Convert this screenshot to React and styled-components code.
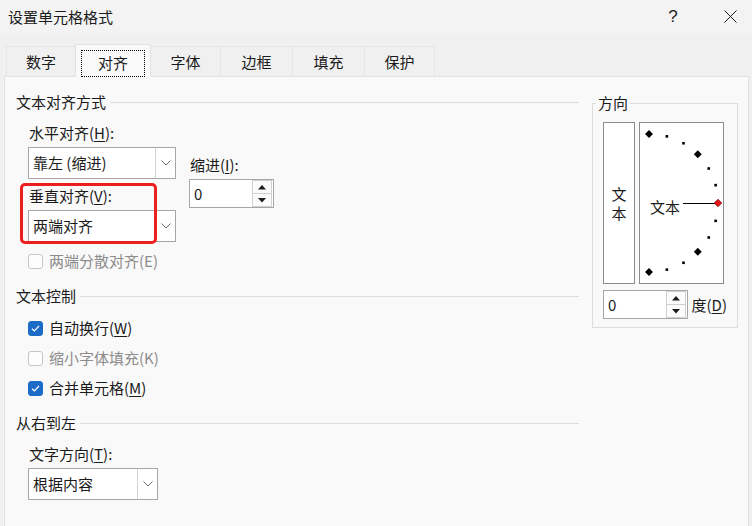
import React from 'react'
import styled, { createGlobalStyle } from 'styled-components'

const GlobalStyle = createGlobalStyle`
  html, body { margin: 0; padding: 0; }
  body {
    background: #f0f0f0;
    font-family: "Noto Sans CJK SC", "Microsoft YaHei UI", sans-serif;
    color: #1b1b1b;
  }
  * { box-sizing: border-box; }
`

const tabs = [
  { label: '数字', width: 70 },
  { label: '对齐', width: 76, active: true },
  { label: '字体', width: 71 },
  { label: '边框', width: 73 },
  { label: '填充', width: 73 },
  { label: '保护', width: 71 },
]

const dialTicks = [90, 75, 60, 45, 30, 15, -15, -30, -45, -60, -75, -90]

const Chevron = () => (
  <svg width="10" height="6" viewBox="0 0 10 6">
    <polyline points="0.5,0.5 5,5 9.5,0.5" fill="none" stroke="#6a6a6a" strokeWidth="1" />
  </svg>
)

const Tri = ({ down }) => (
  <svg width="8" height="5" viewBox="0 0 8 5">
    <polygon points={down ? '0,0 8,0 4,4.5' : '0,4.5 8,4.5 4,0'} fill="#1b1b1b" />
  </svg>
)

const Select = ({ value, width }) => (
  <SelectBox $width={width}>
    <SelectValue>{value}</SelectValue>
    <SelectButton><Chevron /></SelectButton>
  </SelectBox>
)

const Spin = ({ value }) => (
  <SpinBox>
    <SpinValue>{value}</SpinValue>
    <SpinButtons>
      <SpinButton><Tri /></SpinButton>
      <SpinButton><Tri down /></SpinButton>
    </SpinButtons>
  </SpinBox>
)

const Check = ({ checked, disabled, children }) => (
  <CheckRow $disabled={disabled}>
    <CheckMark $checked={checked}>
      {checked && (
        <svg width="11" height="11" viewBox="0 0 11 11">
          <polyline points="2,5.8 4.4,8 9,3" fill="none" stroke="#fff" strokeWidth="1.2" />
        </svg>
      )}
    </CheckMark>
    <span>{children}</span>
  </CheckRow>
)

const Dial = () => {
  const cx = 9
  const cy = 80
  const r = 69
  return (
    <DialSvg viewBox="0 0 83 160">
      {dialTicks.map(a => {
        const rad = (a * Math.PI) / 180
        const x = cx + r * Math.cos(rad)
        const y = cy - r * Math.sin(rad)
        const big = Math.abs(a) === 90 || Math.abs(a) === 45
        return big ? (
          <rect key={a} x={x - 2.8} y={y - 2.8} width="5.6" height="5.6" fill="#000" transform={`rotate(45 ${x} ${y})`} />
        ) : (
          <rect key={a} x={x - 1.3} y={y - 1.3} width="2.6" height="2.6" fill="#000" />
        )
      })}
      <line x1="43" y1="80.5" x2="76" y2="80.5" stroke="#000" strokeWidth="1" />
      <rect x="75.3" y="77.3" width="5.4" height="5.4" fill="#e3141a" stroke="#6b0000" strokeWidth="0.6" transform="rotate(45 78 80)" />
    </DialSvg>
  )
}

const App = () => {
  return (
    <Dialog>
      <GlobalStyle />
      <TitleBar>
        <Title>设置单元格格式</Title>
        <TitleButtons>
          <HelpButton>?</HelpButton>
          <CloseButton>
            <svg width="13" height="13" viewBox="0 0 13 13">
              <path d="M0.5 0.5 L12.5 12.5 M12.5 0.5 L0.5 12.5" stroke="#1b1b1b" strokeWidth="1" fill="none" />
            </svg>
          </CloseButton>
        </TitleButtons>
      </TitleBar>

      <TabRow>
        {tabs.map(t => (
          <Tab key={t.label} $width={t.width} $active={t.active}>
            {t.active ? <FocusRing>{t.label}</FocusRing> : t.label}
          </Tab>
        ))}
      </TabRow>

      <Panel>
        <LeftColumn>
          <Header><span>文本对齐方式</span><Rule /></Header>
          <AlignBody>
            <Fields>
              <Label>水平对齐(<Key>H</Key>):</Label>
              <Select value="靠左 (缩进)" width={148} />
              <Label $top={7}>垂直对齐(<Key>V</Key>):</Label>
              <Select value="两端对齐" width={148} />
              <Highlight />
            </Fields>
            <IndentColumn>
              <Label>缩进(<Key>I</Key>):</Label>
              <Spin value="0" />
            </IndentColumn>
          </AlignBody>
          <CheckList $top={9}>
            <Check disabled>两端分散对齐(E)</Check>
          </CheckList>

          <Header $top={15}><span>文本控制</span><Rule /></Header>
          <CheckList $top={12}>
            <Check checked>自动换行(<Key>W</Key>)</Check>
            <Check disabled>缩小字体填充(K)</Check>
            <Check checked>合并单元格(<Key>M</Key>)</Check>
          </CheckList>

          <Header $top={15}><span>从右到左</span><Rule /></Header>
          <Fields $top={11}>
            <Label>文字方向(<Key>T</Key>):</Label>
            <Select value="根据内容" width={130} />
          </Fields>
        </LeftColumn>

        <DirectionGroup>
          <Legend>方向</Legend>
          <DirectionInner>
            <DirectionRow>
              <VerticalBox>
                <VerticalChar>文</VerticalChar>
                <VerticalChar>本</VerticalChar>
              </VerticalBox>
              <DialBox>
                <Dial />
                <DialText>文本</DialText>
              </DialBox>
            </DirectionRow>
            <DegreeRow>
              <Spin value="0" />
              <span>度(<Key>D</Key>)</span>
            </DegreeRow>
          </DirectionInner>
        </DirectionGroup>
      </Panel>
    </Dialog>
  )
}

export default App

const Dialog = styled.div`
  width: 752px;
  height: 526px;
  overflow: hidden;
  display: flex;
  flex-direction: column;
  background: #f0f0f0;
`

const TitleBar = styled.div`
  height: 35px;
  flex: none;
  display: flex;
  align-items: center;
  background: #f3f3f3;
  padding-left: 8px;
  padding-bottom: 2px;
`

const Title = styled.div`
  font-size: 15px;
  line-height: 20px;
`

const TitleButtons = styled.div`
  margin-left: auto;
  display: flex;
  gap: 12px;
`

const HelpButton = styled.div`
  width: 46px;
  text-align: center;
  font-family: "Liberation Sans", sans-serif;
  font-size: 17px;
  line-height: 20px;
`

const CloseButton = styled.div`
  width: 44px;
  display: flex;
  justify-content: center;
  align-items: center;
`

const TabRow = styled.div`
  height: 42px;
  flex: none;
  display: flex;
  align-items: flex-end;
  padding-left: 6px;
  position: relative;
  z-index: 1;
  margin-bottom: -1px;
`

const Tab = styled.div`
  width: ${p => p.$width}px;
  height: ${p => (p.$active ? 33 : 31)}px;
  margin-right: -1px;
  display: flex;
  align-items: center;
  justify-content: center;
  font-size: 15px;
  line-height: 20px;
  background: ${p => (p.$active ? '#f9f9f9' : '#f0f0f0')};
  border: 1px solid ${p => (p.$active ? '#e2e2e2' : '#e6e6e6')};
  border-bottom: ${p => (p.$active ? 'none' : '1px solid #e2e2e2')};
  position: relative;
  z-index: ${p => (p.$active ? 2 : 1)};
  padding-top: ${p => (p.$active ? 1 : 0)}px;
`

const FocusRing = styled.span`
  width: 64px;
  height: 27px;
  margin-top: 3px;
  border: 1px dotted #000;
  display: flex;
  align-items: center;
  justify-content: center;
`

const Panel = styled.div`
  flex: 1;
  margin: 0 3px 0 4px;
  border: 1px solid #e2e2e2;
  border-bottom: none;
  background: #f9f9f9;
  display: flex;
  align-items: flex-start;
  padding: 15px 0 0 11px;
  gap: 13px;
`

const LeftColumn = styled.div`
  width: 563px;
  display: flex;
  flex-direction: column;
`

const Header = styled.div`
  display: flex;
  align-items: center;
  font-size: 15px;
  line-height: 20px;
  margin-top: ${p => p.$top || 0}px;
`

const Rule = styled.div`
  flex: 1;
  height: 1px;
  margin-left: 4px;
  background: #dcdcdc;
`

const AlignBody = styled.div`
  display: flex;
  margin-top: 11px;
  padding-left: 12px;
`

const Fields = styled.div`
  position: relative;
  display: flex;
  flex-direction: column;
  align-items: flex-start;
  margin-top: ${p => p.$top || 0}px;
  padding-left: ${p => (p.$top ? 12 : 0)}px;
`

const Label = styled.div`
  font-size: 15px;
  line-height: 20px;
  padding-left: 1px;
  margin-top: ${p => p.$top || 0}px;
  margin-bottom: 4px;
  white-space: nowrap;
`

const Key = styled.span`
  text-decoration: underline;
  text-underline-offset: 2px;
`

const SelectBox = styled.div`
  width: ${p => p.$width}px;
  height: 32px;
  display: flex;
  background: #fff;
  border: 1px solid #a6a6a6;
`

const SelectValue = styled.div`
  flex: 1;
  display: flex;
  align-items: center;
  padding-left: 4px;
  font-size: 15px;
  line-height: 20px;
`

const SelectButton = styled.div`
  width: 20px;
  border-left: 1px solid #d2d2d2;
  display: flex;
  align-items: center;
  justify-content: center;
`

const Highlight = styled.div`
  position: absolute;
  left: -8px;
  top: 60px;
  width: 137px;
  height: 61px;
  border: 3px solid #ec1f1f;
  border-radius: 5px;
  pointer-events: none;
`

const IndentColumn = styled.div`
  margin-left: 13px;
  padding-top: 32px;
  display: flex;
  flex-direction: column;
  align-items: flex-start;
`

const SpinBox = styled.div`
  width: 85px;
  height: 29px;
  display: flex;
  background: #fff;
  border: 1px solid #a6a6a6;
`

const SpinValue = styled.div`
  flex: 1;
  display: flex;
  align-items: center;
  padding-left: 4px;
  font-size: 15px;
`

const SpinButtons = styled.div`
  width: 20px;
  margin: 0 1px 0 0;
  display: flex;
  flex-direction: column;
`

const SpinButton = styled.div`
  flex: 1;
  display: flex;
  align-items: center;
  justify-content: center;
  border: 1px solid #d0d0d0;
  background: #fbfbfb;
  & + & { border-top: none; }
`

const CheckList = styled.div`
  display: flex;
  flex-direction: column;
  gap: 10px;
  padding-left: 12px;
  margin-top: ${p => p.$top || 0}px;
`

const CheckRow = styled.div`
  height: 20px;
  display: flex;
  align-items: center;
  gap: 6px;
  font-size: 15px;
  line-height: 20px;
  color: ${p => (p.$disabled ? '#8c8c8c' : '#1b1b1b')};
`

const CheckMark = styled.div`
  width: 15px;
  height: 15px;
  border-radius: 3px;
  display: flex;
  align-items: center;
  justify-content: center;
  background: ${p => (p.$checked ? '#1c6cc7' : '#fdfdfd')};
  border: 1px solid ${p => (p.$checked ? '#1c6cc7' : '#c6c6c6')};
`

const DirectionGroup = styled.fieldset`
  width: 146px;
  margin: 1px 0 0;
  padding: 0;
  min-width: 0;
  border: 1px solid #dcdcdc;
`

const Legend = styled.legend`
  margin-left: 3px;
  padding: 0 2px;
  font-size: 15px;
  line-height: 20px;
`

const DirectionInner = styled.div`
  padding: 9px 10px 8px 10px;
`

const DirectionRow = styled.div`
  display: flex;
  gap: 4px;
  height: 162px;
`

const VerticalBox = styled.div`
  width: 32px;
  border: 1px solid #8c8c8c;
  background: #fff;
  display: flex;
  flex-direction: column;
  align-items: center;
  justify-content: center;
  gap: 1px;
  font-size: 15px;
  padding-top: 1px;
`

const VerticalChar = styled.span`
  display: block;
  height: 18px;
  line-height: 18px;
`

const DialBox = styled.div`
  width: 85px;
  border: 1px solid #8c8c8c;
  background: #fff;
  position: relative;
  display: flex;
  align-items: center;
  padding: 8px 0 0 10px;
`

const DialSvg = styled.svg`
  position: absolute;
  left: 0;
  top: 0;
  width: 83px;
  height: 160px;
`

const DialText = styled.span`
  position: relative;
  font-size: 15px;
  line-height: 20px;
`

const DegreeRow = styled.div`
  margin-top: 6px;
  display: flex;
  align-items: center;
  gap: 4px;
  font-size: 15px;
  line-height: 20px;
  white-space: nowrap;
`
